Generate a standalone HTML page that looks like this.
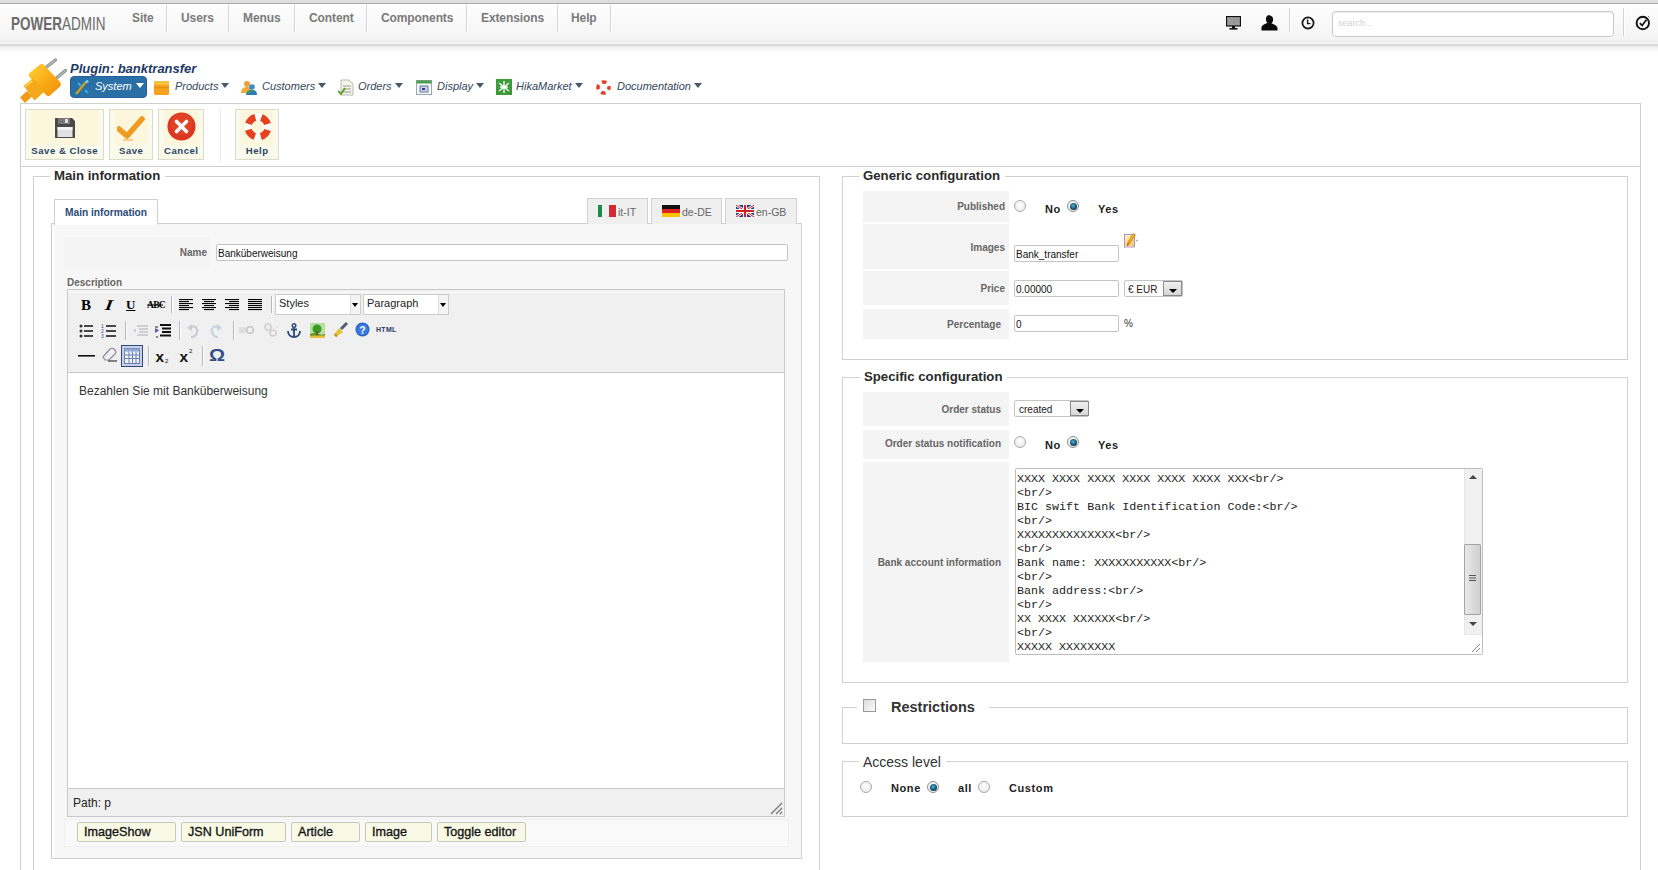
<!DOCTYPE html>
<html><head><meta charset="utf-8">
<style>
*{box-sizing:border-box;margin:0;padding:0}
html,body{width:1658px;height:870px;overflow:hidden;background:#fff}
body{position:relative;font-family:"Liberation Sans",sans-serif;color:#333}
.a{position:absolute}
.t{position:absolute;white-space:nowrap;line-height:1}
/* header */
#hdr-band{left:0;top:0;width:1658px;height:3px;background:#dedede}
#hdr-line{left:0;top:3px;width:1658px;height:1px;background:#ababab}
#hdr{left:0;top:4px;width:1658px;height:38px;background:linear-gradient(#fefefe,#f3f3f3)}
#hdr-b1{left:0;top:41px;width:1658px;height:1px;background:#ededed}
#hdr-sh{left:0;top:42px;width:1658px;height:11px;background:linear-gradient(#f4f4f4 0,#f4f4f4 2px,#dadada 2px,#dadada 4px,#eaeaea 4px,#f2f2f2 6px,#fff 11px)}
.sep{position:absolute;top:5px;width:1px;height:27px;background:#d4d4d4;box-shadow:1px 0 0 #fff}
.nav{position:absolute;top:11px;font-size:12px;font-weight:bold;color:#7a7a7a;letter-spacing:-0.1px;line-height:14px}
#logo{left:11px;top:15px;font-size:18px;color:#6b6b6b;transform:scaleX(0.75);transform-origin:0 0;line-height:18px;letter-spacing:0}
/* title */
#ttl{left:70px;top:62px;font-size:13px;font-weight:bold;font-style:italic;color:#1f3968;line-height:13px}
.sub{position:absolute;top:80px;font-size:11px;font-style:italic;color:#33475e;line-height:12px}
.arr{display:inline-block;width:0;height:0;border-left:4px solid transparent;border-right:4px solid transparent;border-top:5px solid #4a5a6a;vertical-align:2px}
/* outer box */
#outer{left:20px;top:103px;width:1621px;height:800px;border:1px solid #cfcfcf;border-bottom:none}
#tbline{left:21px;top:166px;width:1619px;height:1px;background:#cfcfcf}
.tb{position:absolute;top:109px;height:51px;background:#f9faea linear-gradient(#fbf6dc,#fbf6dc) no-repeat 5px 0/calc(100% - 10px) 35px;border:1px solid #dcdccb}
.tbl{position:absolute;top:35px;font-size:9.6px;font-weight:bold;color:#2c4566;line-height:11px;text-align:center;left:0;right:0;letter-spacing:0.5px;text-indent:0.5px}

.fs{position:absolute;border:1px solid #d0d0d0}
.lg{position:absolute;background:#fff;padding:0 5px 0 4px;font-size:13.2px;font-weight:bold;color:#2a2a2a;line-height:14px;white-space:nowrap}
.lbl{position:absolute;background:#f4f4f4;font-size:10px;font-weight:bold;color:#666;text-align:right;white-space:nowrap;line-height:11px}
.inp{position:absolute;background:#fff;border:1px solid #c4c4c4;border-radius:2px;font-size:10px;color:#111;line-height:13px;padding-top:2px;padding-left:1px;white-space:nowrap;overflow:hidden}
.ltab{position:absolute;top:198px;height:26px;background:#efefef;border:1px solid #d2d2d2;border-bottom:none;font-size:10.5px;color:#666;line-height:11px}
.ebtn{position:absolute;top:822px;height:20px;background:#f8fae6;border:1px solid #c6c8b8;border-radius:2px;font-size:12.6px;font-weight:normal;color:#151515;line-height:18px;padding-left:6px;white-space:nowrap;-webkit-text-stroke:0.35px #151515}
.esep{position:absolute;width:1px;background:#b8b8b8;box-shadow:1px 0 0 #fff}

.rad{position:absolute;width:12px;height:12px;border-radius:50%;border:1px solid #a9a9a9;background:radial-gradient(circle at 50% 40%,#fff,#e6e6e6)}
.rad.on{border-color:#8f8f8f}.rad.on::after{content:"";position:absolute;left:1.5px;top:1.5px;width:7px;height:7px;border-radius:50%;background:radial-gradient(circle at 45% 40%,#4fb8d8,#17506e 55%,#0d2f44 80%)}
.rl{position:absolute;font-size:11px;font-weight:bold;color:#222;line-height:11px;white-space:nowrap;letter-spacing:0.6px}
.lc{position:absolute;left:863px;width:146px;background:#f4f4f4}
.lt{position:absolute;font-size:10px;font-weight:bold;color:#666;line-height:11px;white-space:nowrap;text-align:right}
.mono{position:absolute;font-family:"Liberation Mono",monospace;font-size:11.7px;line-height:14px;color:#222;white-space:pre}
</style></head><body>
<div class="a" id="hdr-band"></div>
<div class="a" id="hdr-line"></div>
<div class="a" id="hdr"></div>
<div class="a" id="hdr-b1"></div>
<div class="a" id="hdr-sh"></div>
<div class="t" id="logo"><b>POWER</b>ADMIN</div>
<div class="nav" style="left:132px">Site</div>
<div class="sep" style="left:166px"></div>
<div class="nav" style="left:181px">Users</div>
<div class="sep" style="left:228px"></div>
<div class="nav" style="left:243px">Menus</div>
<div class="sep" style="left:294px"></div>
<div class="nav" style="left:309px">Content</div>
<div class="sep" style="left:366px"></div>
<div class="nav" style="left:381px">Components</div>
<div class="sep" style="left:466px"></div>
<div class="nav" style="left:481px">Extensions</div>
<div class="sep" style="left:557px"></div>
<div class="nav" style="left:571px">Help</div>
<div class="sep" style="left:610px"></div>

<svg class="a" style="left:1226px;top:16px" width="15" height="14" viewBox="0 0 15 14"><rect x="0.5" y="0.5" width="14" height="9.5" fill="#9a9a9a" stroke="#111" stroke-width="1.2"/><rect x="6" y="10" width="3" height="2" fill="#111"/><rect x="3.5" y="12" width="8" height="1.6" fill="#111"/></svg>
<svg class="a" style="left:1261px;top:15px" width="17" height="16" viewBox="0 0 17 16"><path d="M8.5 0.5c2.3 0 3.6 1.7 3.6 4 0 1.8-.8 3.3-1.7 4 2.9.8 5.8 2.1 6.1 4.5V15.5H.5V12.5c.3-2.4 3.2-3.7 6.1-4.5-.9-.7-1.7-2.2-1.7-4 0-2.3 1.3-4 3.6-4z" fill="#0a0a0a"/></svg>
<div class="sep" style="left:1289px;top:8px;height:24px"></div>
<svg class="a" style="left:1301px;top:16px" width="14" height="14" viewBox="0 0 14 14"><circle cx="7" cy="7" r="5.6" fill="none" stroke="#111" stroke-width="1.7"/><path d="M6.6 3.6V7.6H9.4" fill="none" stroke="#111" stroke-width="1.4"/></svg>
<div class="a" style="left:1332px;top:11px;width:282px;height:26px;border:1px solid #c9c9c9;border-radius:4px;background:#fff;box-shadow:inset 0 1px 1px #eee"></div>
<div class="t" style="left:1338px;top:19px;font-size:9px;color:#d2d2d2">search...</div>
<div class="sep" style="left:1623px;top:8px;height:28px"></div>
<svg class="a" style="left:1635px;top:14px" width="17" height="17" viewBox="0 0 17 17"><circle cx="7.8" cy="9" r="6.2" fill="none" stroke="#111" stroke-width="1.9"/><path d="M4.8 9.2l2.3 2.2 4.3-5.6" fill="none" stroke="#111" stroke-width="1.7"/><path d="M13 2.2l1.5 1.2" stroke="#666" stroke-width="1"/></svg>


<svg class="a" style="left:15px;top:55px" width="60" height="52" viewBox="0 0 60 52">
<defs><linearGradient id="pg" x1="0" y1="0" x2="1" y2="1"><stop offset="0" stop-color="#ffd23c"/><stop offset="0.55" stop-color="#f9aa14"/><stop offset="1" stop-color="#f08c0c"/></linearGradient></defs>
<path d="M31.5 12L40.5 5M41.5 23L50.5 15.5" stroke="#8c9696" stroke-width="3.4" stroke-linecap="round"/><path d="M31.5 12L40.5 5M41.5 23L50.5 15.5" stroke="#c8d0d0" stroke-width="1"/>

<path d="M25 9.5Q27 8 29 10L45 27Q47 30 44.5 32L35 40.5Q33 42 31 40L14.5 22Q12.5 19.5 15 17.5Z" fill="url(#pg)"/>
<path d="M8.5 30.5L18 23.5L29 37L19.5 45.5Z" fill="#f4a81c"/>
<path d="M9 30L16.5 25L18 27L11 32Z" fill="#ffd050" opacity="0.8"/>
<path d="M5 42.5L12 36L17 41.5L10 48Z" fill="#f09a18"/>
</svg>
<div class="t" id="ttl">Plugin: banktransfer</div>
<div class="a" style="left:70px;top:76px;width:77px;height:22px;background:#2a6fa6;border-radius:4px;border:1px solid #22609a"></div>
<svg class="a" style="left:74px;top:79px" width="16" height="16" viewBox="0 0 16 16"><path d="M2 15L12 3" stroke="#d6a020" stroke-width="2.2"/><path d="M4 4l3 3M11 11l3 3" stroke="#36b0e0" stroke-width="2"/><circle cx="13" cy="2.5" r="1.6" fill="#7bd0f0"/></svg>
<div class="sub" style="left:95px;color:#fff">System <span class="arr" style="border-top-color:#fff;margin-left:1px"></span></div>
<svg class="a" style="left:154px;top:80px" width="15" height="15" viewBox="0 0 15 15"><rect x="0" y="1" width="15" height="14" rx="1.5" fill="#f6a21c"/><rect x="0" y="1" width="15" height="4" fill="#f8c040"/><rect x="0" y="7" width="15" height="1.2" fill="#e78d10"/></svg>
<div class="sub" style="left:175px">Products <span class="arr"></span></div>
<svg class="a" style="left:241px;top:80px" width="16" height="15" viewBox="0 0 16 15"><circle cx="6" cy="4" r="3" fill="#e9a23a"/><path d="M0 13c0-4 2.5-6 6-6s5 2 5 5v1z" fill="#f2a93a"/><circle cx="11" cy="7" r="2.8" fill="#3b8bc6"/><path d="M5 15c0-3.5 2.5-5 6-5s5 1.5 5 5z" fill="#2e79b8"/><path d="M7 14c1-2 3-3 5-3" stroke="#3aa04a" stroke-width="1.5" fill="none"/></svg>
<div class="sub" style="left:262px">Customers <span class="arr"></span></div>
<svg class="a" style="left:338px;top:79px" width="16" height="17" viewBox="0 0 16 17"><path d="M3 1h8l4 4v11H3z" fill="#f4f4ee" stroke="#b9b9a9"/><path d="M5 7h8M5 10h8M5 13h8" stroke="#9a9a8a"/><path d="M0 12l3 3 4-6" stroke="#5aa02c" stroke-width="1.8" fill="none"/></svg>
<div class="sub" style="left:358px">Orders <span class="arr"></span></div>
<svg class="a" style="left:416px;top:80px" width="16" height="15" viewBox="0 0 16 15"><rect x="0.5" y="0.5" width="15" height="14" fill="#f4f6f8" stroke="#9aa6b0"/><rect x="0.5" y="0.5" width="15" height="3" fill="#4aa050"/><rect x="4" y="6" width="8" height="6" fill="#c6d4e6" stroke="#6b7f9a"/><rect x="6" y="8" width="3" height="2" fill="#33a"/></svg>
<div class="sub" style="left:437px">Display <span class="arr"></span></div>
<svg class="a" style="left:496px;top:79px" width="16" height="16" viewBox="0 0 16 16"><rect width="16" height="16" fill="#3f9a3a"/><path d="M8 2v12M3 4l10 8M13 4L3 12M4 8h8" stroke="#fff" stroke-width="1.3"/></svg>
<div class="sub" style="left:516px">HikaMarket <span class="arr"></span></div>
<svg class="a" style="left:596px;top:80px" width="15" height="15" viewBox="0 0 15 15"><circle cx="7.5" cy="7.5" r="5.5" fill="none" stroke="#fff" stroke-width="3.5"/><circle cx="7.5" cy="7.5" r="5.5" fill="none" stroke="#e0432a" stroke-width="3.5" stroke-dasharray="4.6 4.03" stroke-dashoffset="2.3"/></svg>
<div class="sub" style="left:617px">Documentation <span class="arr"></span></div>


<div class="a" id="outer"></div>
<div class="a" id="tbline"></div>
<div class="tb" style="left:25px;width:79px"><div class="tbl">Save &amp; Close</div>
<svg class="a" style="left:28px;top:7px" width="22" height="22" viewBox="0 0 22 22"><path d="M1 1h17l3 3v17H1z" fill="#4a4a4a"/><rect x="4" y="1" width="12" height="6" fill="#777"/><rect x="11" y="2" width="3" height="4" fill="#ddd"/><rect x="3.5" y="10" width="15" height="10" fill="#e2e2e2"/><rect x="3.5" y="10" width="15" height="3" fill="#f4f4f4"/></svg></div>
<div class="tb" style="left:109px;width:44px"><div class="tbl">Save</div>
<svg class="a" style="left:7px;top:6px" width="28" height="26" viewBox="0 0 28 26"><path d="M2 13l8 7L25 3" fill="none" stroke="#f09a20" stroke-width="5.5" stroke-linecap="round" stroke-linejoin="round"/><path d="M6 24h10" stroke="#f6c070" stroke-width="1.5"/></svg></div>
<div class="tb" style="left:158px;width:46px"><div class="tbl">Cancel</div>
<svg class="a" style="left:8px;top:2px" width="29" height="29" viewBox="0 0 29 29"><circle cx="14.5" cy="14.5" r="14" fill="#d9371f"/><circle cx="14.5" cy="12" r="11" fill="#e8482a" opacity="0.6"/><path d="M9.5 9.5l10 10M19.5 9.5l-10 10" stroke="#fff" stroke-width="3.6" stroke-linecap="round"/></svg></div>
<div class="a" style="left:220px;top:108px;width:1px;height:54px;background:#ececec"></div>
<div class="tb" style="left:235px;width:44px"><div class="tbl">Help</div>
<svg class="a" style="left:8px;top:3px" width="28" height="28" viewBox="0 0 28 28"><circle cx="14" cy="14" r="10" fill="none" stroke="#fff" stroke-width="7"/><circle cx="14" cy="14" r="10" fill="none" stroke="#e5411f" stroke-width="7" stroke-dasharray="9.7 6" stroke-dashoffset="4.85" transform="rotate(-45 14 14)"/></svg></div>


<div class="fs" style="left:33px;top:176px;width:787px;height:720px;border-bottom:none"></div>
<div class="lg" style="left:50px;top:169px">Main information</div>
<!-- panel -->
<div class="a" style="left:51px;top:223px;width:751px;height:636px;background:#f7f7f7;border:1px solid #cfcfcf;box-shadow:inset 3px 0 0 #fdfdfd"></div>
<div class="a" style="left:54px;top:199px;width:104px;height:26px;background:#fff;border:1px solid #cfcfcf;border-bottom:none"></div>
<div class="t" style="left:65px;top:208px;font-size:10.2px;font-weight:bold;color:#2b4a78">Main information</div>
<div class="ltab" style="left:587px;width:61px"><svg class="a" style="left:10px;top:6px" width="18" height="12" viewBox="0 0 18 12"><rect width="4" height="12" fill="#1c8a4a"/><rect x="4" width="9" height="12" fill="#efefef"/><rect x="11" width="7" height="12" fill="#d32a35"/></svg><span class="t" style="left:30px;top:8px">it-IT</span></div>
<div class="ltab" style="left:651px;width:71px"><svg class="a" style="left:10px;top:6px" width="18" height="12" viewBox="0 0 18 12"><rect width="18" height="4" fill="#111"/><rect y="4" width="18" height="4" fill="#d22"/><rect y="8" width="18" height="4" fill="#f6c400"/></svg><span class="t" style="left:30px;top:8px">de-DE</span></div>
<div class="ltab" style="left:725px;width:72px"><svg class="a" style="left:10px;top:6px" width="18" height="12" viewBox="0 0 18 12"><rect width="18" height="12" fill="#2a3a8a"/><path d="M0 0L18 12M18 0L0 12" stroke="#fff" stroke-width="2.6"/><path d="M0 0L18 12M18 0L0 12" stroke="#c22" stroke-width="1"/><path d="M9 0v12M0 6h18" stroke="#fff" stroke-width="4"/><path d="M9 0v12M0 6h18" stroke="#c22" stroke-width="2.2"/></svg><span class="t" style="left:30px;top:8px">en-GB</span></div>
<!-- name row -->
<div class="lbl" style="left:64px;top:237px;width:146px;height:32px;padding-right:3px;padding-top:10px">Name</div>
<div class="inp" style="left:216px;top:244px;width:572px;height:17px">Banküberweisung</div>
<div class="t" style="left:67px;top:278px;font-size:10px;font-weight:bold;color:#666">Description</div>
<!-- editor -->
<div class="a" style="left:67px;top:289px;width:718px;height:528px;border:1px solid #c8c8c8;background:#f0f0f0;box-shadow:inset 0 2px 0 #f3f3f3,inset 0 3px 0 #fafafa"></div>
<div class="a" style="left:68px;top:372px;width:716px;height:417px;background:#fff;border-top:1px solid #c8c8c8;border-bottom:1px solid #c8c8c8"></div>
<div class="t" style="left:79px;top:385px;font-size:12px;color:#333">Bezahlen Sie mit Banküberweisung</div>
<div class="t" style="left:73px;top:797px;font-size:12px;color:#222">Path: p</div>
<svg class="a" style="left:770px;top:801px" width="13" height="14" viewBox="0 0 13 14"><path d="M1 13L12 2M6 13L12 7M10 13l2-2" stroke="#777" stroke-width="1.3"/></svg>
<div class="t" style="left:81px;top:297px;font:bold 15px 'Liberation Serif',serif;color:#000">B</div>
<div class="t" style="left:104px;top:297px;font:italic bold 15px 'Liberation Serif',serif;color:#000;transform:skewX(-8deg) scaleX(1.3);transform-origin:0 100%">I</div>
<div class="t" style="left:126px;top:297px;font:bold 13px 'Liberation Serif',serif;color:#000;text-decoration:underline">U</div>
<div class="t" style="left:147px;top:300px;font:bold 9.5px 'Liberation Serif',serif;color:#000;letter-spacing:-0.7px">ABC</div>
<svg class="a" style="left:147px;top:304px" width="17" height="2" viewBox="0 0 17 2"><rect y="0.5" width="16" height="1" fill="#000"/></svg>
<div class="esep" style="left:171px;top:296px;height:17px"></div>
<svg class="a" style="left:179px;top:299px" width="14" height="12" viewBox="0 0 14 12"><rect x="0" y="0" width="14" height="1.1" fill="#000"/><rect x="0" y="2" width="10" height="1.1" fill="#000"/><rect x="0" y="4" width="14" height="1.1" fill="#000"/><rect x="0" y="6" width="10" height="1.1" fill="#000"/><rect x="0" y="8" width="14" height="1.1" fill="#000"/><rect x="0" y="10" width="10" height="1.1" fill="#000"/></svg>
<svg class="a" style="left:202px;top:299px" width="14" height="12" viewBox="0 0 14 12"><rect x="0.0" y="0" width="14" height="1.1" fill="#000"/><rect x="2.0" y="2" width="10" height="1.1" fill="#000"/><rect x="0.0" y="4" width="14" height="1.1" fill="#000"/><rect x="2.0" y="6" width="10" height="1.1" fill="#000"/><rect x="0.0" y="8" width="14" height="1.1" fill="#000"/><rect x="2.0" y="10" width="10" height="1.1" fill="#000"/></svg>
<svg class="a" style="left:225px;top:299px" width="14" height="12" viewBox="0 0 14 12"><rect x="0" y="0" width="14" height="1.1" fill="#000"/><rect x="4" y="2" width="10" height="1.1" fill="#000"/><rect x="0" y="4" width="14" height="1.1" fill="#000"/><rect x="4" y="6" width="10" height="1.1" fill="#000"/><rect x="0" y="8" width="14" height="1.1" fill="#000"/><rect x="4" y="10" width="10" height="1.1" fill="#000"/></svg>
<svg class="a" style="left:248px;top:299px" width="14" height="12" viewBox="0 0 14 12"><rect x="0" y="0" width="14" height="1.1" fill="#000"/><rect x="0" y="2" width="14" height="1.1" fill="#000"/><rect x="0" y="4" width="14" height="1.1" fill="#000"/><rect x="0" y="6" width="14" height="1.1" fill="#000"/><rect x="0" y="8" width="14" height="1.1" fill="#000"/><rect x="0" y="10" width="14" height="1.1" fill="#000"/></svg>
<div class="esep" style="left:271px;top:296px;height:17px"></div>
<div class="a" style="left:275px;top:294px;width:86px;height:21px;background:#fff;border:1px solid #ccc"></div>
<div class="a" style="left:350px;top:295px;width:10px;height:19px;background:#f4f4f4;border-left:1px solid #ddd"></div>
<div class="t" style="left:279px;top:298px;font-size:11px;color:#222">Styles</div>
<div class="a" style="left:352px;top:303px;width:0;height:0;border-left:3px solid transparent;border-right:3px solid transparent;border-top:4px solid #000"></div>
<div class="a" style="left:363px;top:294px;width:86px;height:21px;background:#fff;border:1px solid #ccc"></div>
<div class="a" style="left:438px;top:295px;width:10px;height:19px;background:#f4f4f4;border-left:1px solid #ddd"></div>
<div class="t" style="left:367px;top:298px;font-size:11px;color:#222">Paragraph</div>
<div class="a" style="left:440px;top:303px;width:0;height:0;border-left:3px solid transparent;border-right:3px solid transparent;border-top:4px solid #000"></div>
<svg class="a" style="left:79px;top:324px" width="14" height="14" viewBox="0 0 14 14"><circle cx="2" cy="2" r="1.5" fill="#333"/><circle cx="2" cy="7" r="1.5" fill="#333"/><circle cx="2" cy="12" r="1.5" fill="#333"/><path d="M5 2h9M5 7h9M5 12h9" stroke="#111" stroke-width="1.4"/></svg>
<svg class="a" style="left:101px;top:323px" width="15" height="15" viewBox="0 0 15 15"><text x="0" y="5" font-size="5" fill="#3050a0" font-family="Liberation Sans">1</text><text x="0" y="10" font-size="5" fill="#3050a0" font-family="Liberation Sans">2</text><text x="0" y="15" font-size="5" fill="#3050a0" font-family="Liberation Sans">3</text><path d="M5 3h10M5 8h10M5 13h10" stroke="#111" stroke-width="1.4"/></svg>
<div class="esep" style="left:125px;top:321px;height:19px"></div>
<svg class="a" style="left:132px;top:325px" width="16" height="12" viewBox="0 0 16 12"><path d="M5 1h11M7 4h9M7 7h9M5 10h11" stroke="#c4c4c4" stroke-width="1.3"/><path d="M1 5.5L4 3.5v4z" fill="#c8c8d8"/></svg>
<svg class="a" style="left:155px;top:324px" width="16" height="14" viewBox="0 0 16 14"><path d="M5 1h11M7 4.5h9M7 8h9M5 11.5h11" stroke="#111" stroke-width="1.8"/><path d="M0 3h3M0 6h3" stroke="#222"/><path d="M4 6.5L0 4v5z" fill="#5a5ad0"/><path d="M2 12v2" stroke="#222"/></svg>
<div class="esep" style="left:179px;top:321px;height:19px"></div>
<svg class="a" style="left:186px;top:323px" width="13" height="15" viewBox="0 0 13 15"><path d="M4 4c5-2 8 1 7 5s-4 5-6 5" fill="none" stroke="#c8ccd8" stroke-width="2.2"/><path d="M1 5l5-4v7z" fill="#c8ccd8"/></svg>
<svg class="a" style="left:209px;top:323px" width="14" height="15" viewBox="0 0 14 15"><path d="M10 4c-5-2-8 1-7 5s4 5 6 5" fill="none" stroke="#c8d4dc" stroke-width="2.2"/><path d="M13 5l-5-4v7z" fill="#c8d4dc"/></svg>
<div class="esep" style="left:233px;top:321px;height:19px"></div>
<svg class="a" style="left:239px;top:325px" width="16" height="10" viewBox="0 0 16 10"><path d="M0 3h7M0 5h7M0 7h7" stroke="#ccc"/><circle cx="11" cy="5" r="3.3" fill="none" stroke="#c6c6c6" stroke-width="1.6"/></svg>
<svg class="a" style="left:263px;top:322px" width="15" height="16" viewBox="0 0 15 16"><circle cx="5" cy="5" r="3" fill="none" stroke="#cfcfcf" stroke-width="1.5"/><circle cx="10" cy="11" r="3" fill="none" stroke="#cfcfcf" stroke-width="1.5"/><path d="M7 1v-1M13 5h2" stroke="#ddd"/></svg>
<svg class="a" style="left:287px;top:323px" width="14" height="15" viewBox="0 0 14 15"><circle cx="7" cy="2.5" r="1.8" fill="none" stroke="#2a4a7a" stroke-width="1.4"/><path d="M7 4v10M4 6.5h6" stroke="#2a4a7a" stroke-width="1.8"/><path d="M1 8c0 4 3 6 6 6s6-2 6-6" fill="none" stroke="#2a4a7a" stroke-width="1.8"/></svg>
<svg class="a" style="left:310px;top:323px" width="15" height="15" viewBox="0 0 15 15"><rect x="0" y="0" width="15" height="15" fill="#b8dfa0"/><path d="M0 15V11c3-1 5-1 8 0s5 1 7 0v4z" fill="#5a8a20"/><circle cx="7" cy="6" r="4.5" fill="#3a9a28"/><path d="M7 8v5" stroke="#6a4a1a" stroke-width="1.5"/><rect x="0" y="12.5" width="15" height="2.5" fill="#e8c040"/></svg>
<svg class="a" style="left:332px;top:322px" width="17" height="16" viewBox="0 0 17 16"><path d="M9 7L15 1" stroke="#5a5a7a" stroke-width="3"/><path d="M2 13l5-7 4 4-7 5z" fill="#e6c23a"/><path d="M2 13l2 2 2-1-3-3z" fill="#c09a20"/></svg>
<svg class="a" style="left:355px;top:322px" width="15" height="15" viewBox="0 0 15 15"><circle cx="7.5" cy="7.5" r="7" fill="#2a62c8"/><circle cx="7.5" cy="7.5" r="5.6" fill="#3a7ae0"/><text x="4.6" y="11.6" font-size="10" font-weight="bold" fill="#fff" font-family="Liberation Sans">?</text></svg>
<div class="t" style="left:376px;top:326px;font-size:7px;font-weight:bold;color:#2a3a6a;letter-spacing:0.3px">HTML</div>
<svg class="a" style="left:78px;top:355px" width="17" height="2" viewBox="0 0 17 2"><rect width="17" height="1.6" fill="#111"/></svg>
<svg class="a" style="left:101px;top:346px" width="16" height="16" viewBox="0 0 16 16"><path d="M2 11l7-8c1-1 3-1 4 0l1 1c1 1 1 3 0 4l-6 6H4z" fill="#f0f0f4" stroke="#8a8aa0" stroke-width="1.2"/><path d="M7 15h9" stroke="#444" stroke-width="1.3"/></svg>
<div class="a" style="left:121px;top:345px;width:22px;height:22px;background:#c7d0e4;border:1px solid #304a80"></div>
<svg class="a" style="left:124px;top:348px" width="16" height="16" viewBox="0 0 16 16"><rect x="0.5" y="0.5" width="15" height="15" fill="#eef2fa" stroke="#6a80b0"/><rect x="0.5" y="0.5" width="15" height="3" fill="#90a8d0"/><path d="M1 7h14M1 10.5h14M5 3.5v12M8.5 3.5v12M12 3.5v12" stroke="#6a80b0"/></svg>
<div class="esep" style="left:148px;top:346px;height:20px"></div>
<div class="t" style="left:156px;top:349px;font:bold 14px 'Liberation Sans',sans-serif;color:#111;transform:scaleX(1.1)">x</div>
<div class="t" style="left:165px;top:358px;font:6px 'Liberation Sans',sans-serif;color:#111">2</div>
<div class="t" style="left:180px;top:349px;font:bold 14px 'Liberation Sans',sans-serif;color:#111;transform:scaleX(1.1)">x</div>
<div class="t" style="left:189px;top:348px;font:6px 'Liberation Sans',sans-serif;color:#111">2</div>
<div class="esep" style="left:202px;top:346px;height:20px"></div>
<div class="t" style="left:209px;top:347px;font:bold 16px 'Liberation Sans',sans-serif;color:#34508a;transform:scaleX(1.25);transform-origin:0 0">&#937;</div>

<!-- buttons row -->
<div class="a" style="left:64px;top:819px;width:725px;height:28px;background:#f9f9f9;border:1px solid #f0f0f0"></div>
<div class="ebtn" style="left:77px;width:99px">ImageShow</div>
<div class="ebtn" style="left:181px;width:105px">JSN UniForm</div>
<div class="ebtn" style="left:291px;width:69px">Article</div>
<div class="ebtn" style="left:365px;width:67px">Image</div>
<div class="ebtn" style="left:437px;width:89px">Toggle editor</div>


<div class="fs" style="left:842px;top:176px;width:786px;height:184px"></div>
<div class="lg" style="left:859px;top:169px">Generic configuration</div>
<div class="lc" style="top:191px;height:31px"></div>
<div class="lc" style="top:224px;height:45px"></div>
<div class="lc" style="top:271px;height:34px"></div>
<div class="lc" style="top:309px;height:30px"></div>
<div class="lt" style="right:653px;top:201px">Published</div>
<div class="lt" style="right:653px;top:242px">Images</div>
<div class="lt" style="right:653px;top:283px">Price</div>
<div class="lt" style="right:657px;top:319px">Percentage</div>
<div class="rad" style="left:1014px;top:200px"></div><div class="rl" style="left:1045px;top:204px">No</div>
<div class="rad on" style="left:1067px;top:200px"></div><div class="rl" style="left:1098px;top:204px">Yes</div>
<div class="inp" style="left:1014px;top:245px;width:105px;height:17px">Bank_transfer</div>
<svg class="a" style="left:1124px;top:232px" width="15" height="16" viewBox="0 0 15 16"><rect x="0.5" y="2.5" width="10" height="12.5" fill="#fdf6e0" stroke="#8a80c0" stroke-width="0.8"/><rect x="1" y="3" width="9" height="11.5" fill="url(#eg)"/><defs><linearGradient id="eg" x1="0" y1="0" x2="1" y2="1"><stop offset="0" stop-color="#fff2c0"/><stop offset="1" stop-color="#f6c070"/></linearGradient></defs><path d="M3 13.5l1.2-4L9.5 1.5l2 1.3-5.3 8z" fill="#f2b020" stroke="#b87000" stroke-width="0.6"/><path d="M3 13.5l2.2-2" stroke="#c03010" stroke-width="1"/><path d="M12 7.5l2.5 1-2.5 1z" fill="#aaa"/></svg>
<div class="inp" style="left:1014px;top:280px;width:105px;height:17px">0.00000</div>
<div class="a" style="left:1124px;top:280px;width:59px;height:17px;background:#fff;border:1px solid #c4c4c4;border-radius:2px"></div>
<div class="t" style="left:1128px;top:285px;font-size:10px;color:#222">&#8364; EUR</div>
<div class="a" style="left:1163px;top:281px;width:19px;height:15px;background:linear-gradient(#f0f0f0,#d6d6d6);border:1px solid #8a8a8a"></div>
<div class="a" style="left:1169px;top:289px;width:0;height:0;border-left:4px solid transparent;border-right:4px solid transparent;border-top:4px solid #000"></div>
<div class="inp" style="left:1014px;top:315px;width:105px;height:17px">0</div>
<div class="t" style="left:1124px;top:319px;font-size:10px;color:#333">%</div>
<div class="fs" style="left:842px;top:377px;width:786px;height:306px"></div>
<div class="lg" style="left:860px;top:370px">Specific configuration</div>
<div class="lc" style="top:392px;height:34px"></div>
<div class="lc" style="top:430px;height:29px"></div>
<div class="lc" style="top:462px;height:200px"></div>
<div class="lt" style="right:657px;top:404px">Order status</div>
<div class="lt" style="right:657px;top:438px">Order status notification</div>
<div class="lt" style="right:657px;top:557px">Bank account information</div>
<div class="a" style="left:1014px;top:400px;width:75px;height:17px;background:#fff;border:1px solid #c4c4c4;border-radius:2px"></div>
<div class="t" style="left:1019px;top:405px;font-size:10px;color:#222">created</div>
<div class="a" style="left:1070px;top:401px;width:19px;height:15px;background:linear-gradient(#f0f0f0,#d6d6d6);border:1px solid #8a8a8a"></div>
<div class="a" style="left:1076px;top:409px;width:0;height:0;border-left:4px solid transparent;border-right:4px solid transparent;border-top:4px solid #000"></div>
<div class="rad" style="left:1014px;top:436px"></div><div class="rl" style="left:1045px;top:440px">No</div>
<div class="rad on" style="left:1067px;top:436px"></div><div class="rl" style="left:1098px;top:440px">Yes</div>
<div class="a" style="left:1015px;top:468px;width:468px;height:187px;background:#fff;border:1px solid #bdbdbd;border-radius:2px"></div>
<div class="mono" style="left:1017px;top:472px">XXXX XXXX XXXX XXXX XXXX XXXX XXX&lt;br/&gt;
&lt;br/&gt;
BIC swift Bank Identification Code:&lt;br/&gt;
&lt;br/&gt;
XXXXXXXXXXXXXX&lt;br/&gt;
&lt;br/&gt;
Bank name: XXXXXXXXXXX&lt;br/&gt;
&lt;br/&gt;
Bank address:&lt;br/&gt;
&lt;br/&gt;
XX XXXX XXXXXX&lt;br/&gt;
&lt;br/&gt;
XXXXX XXXXXXXX</div>
<div class="a" style="left:1464px;top:469px;width:18px;height:185px;background:#f0f0f0;border-left:1px solid #e6e6e6"></div>
<div class="a" style="left:1469px;top:475px;width:0;height:0;border-left:4px solid transparent;border-right:4px solid transparent;border-bottom:4px solid #444"></div>
<div class="a" style="left:1464px;top:544px;width:17px;height:71px;background:linear-gradient(90deg,#e8e8e8,#d0d0d0);border:1px solid #a5a5a5;border-radius:1px"></div>
<svg class="a" style="left:1468px;top:574px" width="9" height="8" viewBox="0 0 9 8"><path d="M1 1.5h7M1 4h7M1 6.5h7" stroke="#555" stroke-width="1"/></svg>
<div class="a" style="left:1469px;top:622px;width:0;height:0;border-left:4px solid transparent;border-right:4px solid transparent;border-top:4px solid #444"></div>
<div class="a" style="left:1464px;top:634px;width:18px;height:20px;background:#fff;border-top:1px solid #e6e6e6"></div>
<svg class="a" style="left:1471px;top:643px" width="10" height="10" viewBox="0 0 10 10"><path d="M1 9L9 1M5 9L9 5" stroke="#888" stroke-width="1"/></svg>
<div class="fs" style="left:842px;top:707px;width:786px;height:37px"></div>
<div class="a" style="left:857px;top:697px;width:132px;height:18px;background:#fff"></div>
<div class="a" style="left:863px;top:699px;width:13px;height:13px;border:1px solid #9a9a9a;background:linear-gradient(135deg,#dcdcdc,#fafafa)"></div>
<div class="t" style="left:891px;top:700px;font-size:14.5px;font-weight:bold;color:#333">Restrictions</div>
<div class="fs" style="left:842px;top:761px;width:786px;height:56px"></div>
<div class="lg" style="left:859px;top:755px;font-weight:normal;font-size:14px;color:#333">Access level</div>
<div class="rad" style="left:860px;top:781px"></div><div class="rl" style="left:891px;top:783px">None</div>
<div class="rad on" style="left:927px;top:781px"></div><div class="rl" style="left:958px;top:783px">all</div>
<div class="rad" style="left:978px;top:781px"></div><div class="rl" style="left:1009px;top:783px">Custom</div>

</body></html>
